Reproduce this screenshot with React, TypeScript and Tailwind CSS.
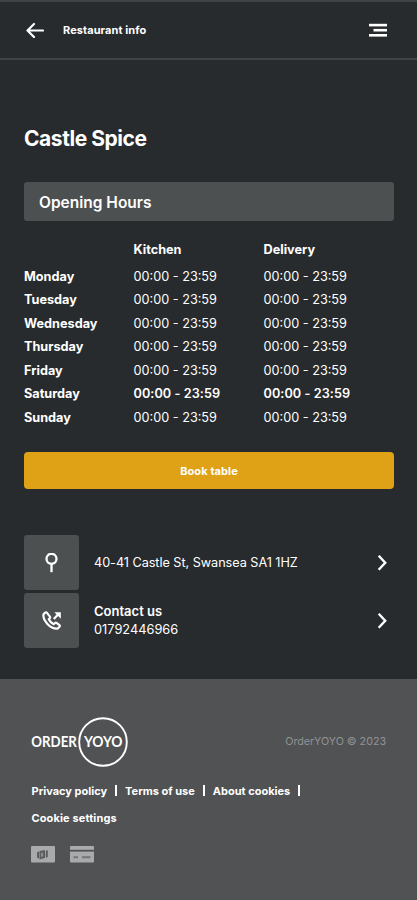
import React from 'react';

interface OpeningDay {
  day: string;
  kitchen: string;
  delivery: string;
  today?: boolean;
}

const OPENING_HOURS: OpeningDay[] = [
  { day: 'Monday', kitchen: '00:00 - 23:59', delivery: '00:00 - 23:59' },
  { day: 'Tuesday', kitchen: '00:00 - 23:59', delivery: '00:00 - 23:59' },
  { day: 'Wednesday', kitchen: '00:00 - 23:59', delivery: '00:00 - 23:59' },
  { day: 'Thursday', kitchen: '00:00 - 23:59', delivery: '00:00 - 23:59' },
  { day: 'Friday', kitchen: '00:00 - 23:59', delivery: '00:00 - 23:59' },
  { day: 'Saturday', kitchen: '00:00 - 23:59', delivery: '00:00 - 23:59', today: true },
  { day: 'Sunday', kitchen: '00:00 - 23:59', delivery: '00:00 - 23:59' },
];

const FOOTER_LINKS = ['Privacy policy', 'Terms of use', 'About cookies'];

const BackIcon = () => (
  <svg width="18" height="16" viewBox="0 0 18 16" fill="none" stroke="currentColor" strokeWidth="2.2" strokeLinecap="round" strokeLinejoin="round">
    <path d="M8 2 1.500 8.500 8 15M1.800 8.500H17" />
  </svg>
);

const MenuIcon = () => (
  <svg width="18" height="14" viewBox="0 0 18 14" fill="currentColor">
    <rect y=".8" width="18" height="2.600" />
    <rect x="4.500" y="5.900" width="13.500" height="2.600" />
    <rect y="11" width="18" height="2.600" />
  </svg>
);

const PinIcon = () => (
  <svg width="14" height="20" viewBox="0 0 14 20" fill="none" stroke="currentColor" strokeWidth="2.300">
    <circle cx="6.500" cy="5.800" r="5" />
    <path d="M6.500 10.800v8.400" />
  </svg>
);

const PhoneIcon = () => (
  <svg width="20" height="20" viewBox="0 0 20 20" fill="none" stroke="currentColor" strokeWidth="2.200" strokeLinejoin="round">
    <path d="M3 1.800 1.500 3.300c-1 6 6.800 14.800 14 14.300l2-1.900c.5-.5.5-1.100 0-1.500l-3-2.300c-.5-.4-1.100-.3-1.500.1l-1.300 1.200c-2-.9-4-2.900-4.900-4.900l1-1.200c.4-.4.500-1 .1-1.500L5 1.800c-.6-.6-1.400-.6-2 0Z" />
    <path d="m11.800 8 4-4.200" />
    <path d="M12.300 1.200h6.500v6.500Z" fill="currentColor" stroke="none" />
  </svg>
);

const ChevronIcon = () => (
  <svg width="10" height="17" viewBox="0 0 10 17" fill="none" stroke="currentColor" strokeWidth="2.400">
    <path d="m1.700 1.700 6.500 7-6.500 7" />
  </svg>
);

const Logo = () => (
  <svg width="98" height="52" viewBox="0 0 98 52" fill="currentColor" className="font-['Lato',sans-serif]">
    <text x=".3" y="31" fontSize="14.500" fontWeight="700" textLength="45.500" lengthAdjust="spacingAndGlyphs">ORDER</text>
    <text x="53" y="31" fontSize="14.500" fontWeight="700" textLength="38.500" lengthAdjust="spacingAndGlyphs">YOYO</text>
    <circle cx="72" cy="26" r="23.800" fill="none" stroke="currentColor" strokeWidth="1.900" />
  </svg>
);

const CashIcon = () => (
  <svg width="24" height="17" viewBox="0 0 24 17">
    <rect width="24" height="16.500" rx="1" fill="#a9aaab" />
    <path d="M6 6.300 8 5.500v7L6 11.800ZM14.800 5l2-1v7l-2 .8Z" fill="#5c5e60" />
    <path d="m8.500 5 5.500-1v8l-5.500 1.500Z" fill="#5c5e60" />
    <ellipse cx="11" cy="8.700" rx="1.100" ry="2.200" fill="#8e9091" />
  </svg>
);

const CardIcon = () => (
  <svg width="24" height="17" viewBox="0 0 24 17">
    <rect width="24" height="16.500" rx="1" fill="#a9aaab" />
    <path d="M0 4.700h24" stroke="#505254" strokeWidth="1.800" />
    <path d="M3.500 11.300H8M12 11.300h8.500" stroke="#727476" strokeWidth="2" />
  </svg>
);

interface ContactRowProps {
  icon: React.ReactNode;
  children: React.ReactNode;
}

const ContactRow: React.FC<ContactRowProps> = ({ icon, children }) => (
  <button className="flex h-[55px] w-full items-center pr-[7px] text-left">
    <span className="mr-[15px] flex h-[55px] w-[55px] items-center justify-center rounded-[3px] bg-[#4d5051]">
      {icon}
    </span>
    <span className="flex-1 text-[13px] leading-[18px]">{children}</span>
    <ChevronIcon />
  </button>
);

const App: React.FC = () => {
  return (
    <div className="flex h-[900px] w-[417px] flex-col overflow-hidden bg-[#272b2e] font-['Inter',sans-serif] text-white">

      {/* Header */}
      <header className="flex h-[60px] items-center border-t-2 border-b-2 border-[#3f4346] pr-[30px] pl-[26px]">
        <BackIcon />
        <span className="ml-[19px] flex-1 text-[11px] font-bold tracking-[0.080px]">Restaurant info</span>
        <MenuIcon />
      </header>

      <main className="flex h-[619px] flex-col px-6 pr-[23px]">
        <h1 className="mt-[63px] text-[21px] leading-8 font-bold tracking-[-0.45px]">Castle Spice</h1>

        <h2 className="mt-[27px] flex h-[39px] items-center rounded-[3px] bg-[#4d5051] pt-[2px] pl-[15px] text-[15.500px] font-semibold">
          Opening Hours
        </h2>

        {/* Opening hours table */}
        <div className="mt-[16px] text-[12.700px]">
          <div className="grid h-[27.500px] grid-cols-[109.500px_130px_1fr] pt-[3px] leading-[20px] font-bold">
            <span />
            <span>Kitchen</span>
            <span>Delivery</span>
          </div>
          {OPENING_HOURS.map((row) => (
            <div key={row.day} className="grid h-[23.600px] grid-cols-[109.500px_130px_1fr] leading-[23.600px]">
              <span className="font-bold">{row.day}</span>
              <span className={row.today ? 'font-semibold tracking-[0.050px]' : ''}>{row.kitchen}</span>
              <span className={row.today ? 'font-semibold tracking-[0.050px]' : ''}>{row.delivery}</span>
            </div>
          ))}
        </div>

        <button className="mt-[22.500px] h-[37px] shrink-0 rounded-[4px] bg-[#dfa217] pt-px text-[11px] font-bold tracking-[0.1px]">
          Book table
        </button>

        <div className="mt-[46px] flex flex-col gap-[3px]">
          <ContactRow icon={<PinIcon />}>
            <span className="text-[12.700px] tracking-[-0.050px]">40-41 Castle St, Swansea SA1 1HZ</span>
          </ContactRow>
          <ContactRow icon={<PhoneIcon />}>
            <strong className="block font-semibold">Contact us</strong>
            <span className="text-[12.800px]">01792446966</span>
          </ContactRow>
        </div>
      </main>

      {/* Footer */}
      <footer className="flex flex-1 flex-col bg-[#505254] pt-[37px] pr-[31px] pl-[31px]">
        <div className="flex items-center justify-between">
          <Logo />
          <span className="pt-px text-[10.700px] text-[#919394]">OrderYOYO © 2023</span>
        </div>
        <nav className="mt-[10px] flex flex-wrap items-center pl-[0.500px] text-[11px] leading-[26.500px] font-bold">
          {FOOTER_LINKS.map((link) => (
            <React.Fragment key={link}>
              <a>{link}</a>
              <span className="mx-[8px] mb-[2px] h-[11px] w-[2px] bg-white" />
            </React.Fragment>
          ))}
          <a className="tracking-[0.120px]">Cookie settings</a>
        </nav>
        <div className="mt-[15px] flex gap-[15px] pl-[0.400px]">
          <CashIcon />
          <CardIcon />
        </div>
      </footer>
    </div>
  );
};

export default App;
